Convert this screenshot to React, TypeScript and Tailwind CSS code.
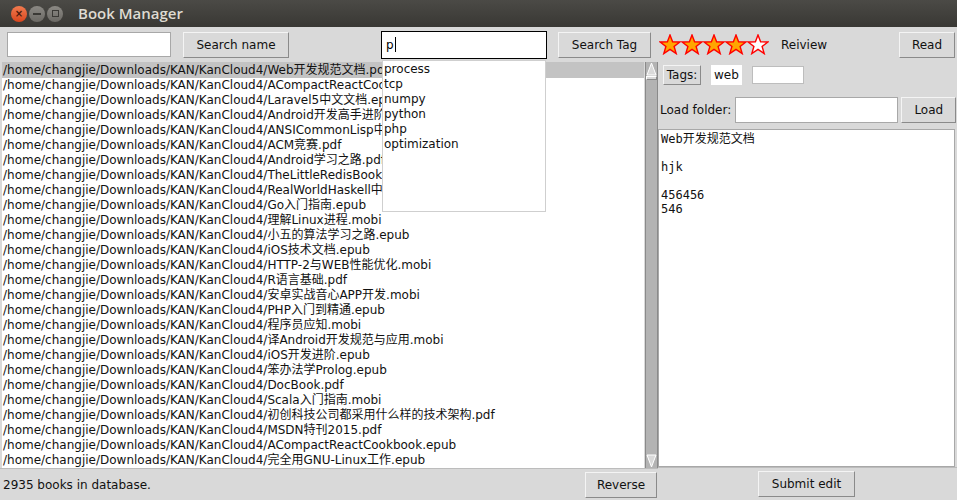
import React from 'react'

const prefix = '/home/changjie/Downloads/KAN/KanCloud4/'
const books = [
  'Web开发规范文档.pdf',
  'ACompactReactCookbook.pdf',
  'Laravel5中文文档.epub',
  'Android开发高手进阶.pdf',
  'ANSICommonLisp中文版.pdf',
  'ACM竞赛.pdf',
  'Android学习之路.pdf',
  'TheLittleRedisBook中文版.pdf',
  'RealWorldHaskell中文版.pdf',
  'Go入门指南.epub',
  '理解Linux进程.mobi',
  '小五的算法学习之路.epub',
  'iOS技术文档.epub',
  'HTTP-2与WEB性能优化.mobi',
  'R语言基础.pdf',
  '安卓实战音心APP开发.mobi',
  'PHP入门到精通.epub',
  '程序员应知.mobi',
  '译Android开发规范与应用.mobi',
  'iOS开发进阶.epub',
  '笨办法学Prolog.epub',
  'DocBook.pdf',
  'Scala入门指南.mobi',
  '初创科技公司都采用什么样的技术架构.pdf',
  'MSDN特刊2015.pdf',
  'ACompactReactCookbook.epub',
  '完全用GNU-Linux工作.epub',
]

const tags = ['process', 'tcp', 'numpy', 'python', 'php', 'optimization']

const font = { fontFamily: '"DejaVu Sans", "Noto Sans CJK SC", sans-serif' }

function Btn({ children, className = '' }: { children: React.ReactNode; className?: string }) {
  return (
    <div
      className={`flex shrink-0 items-center justify-center whitespace-nowrap border border-t-[#f4f4f4] border-l-[#f4f4f4] border-r-[#8a8a8a] border-b-[#8a8a8a] bg-[#d9d9d9] text-[12px] text-[#111] ${className}`}
    >
      {children}
    </div>
  )
}

function Star({ filled }: { filled: boolean }) {
  return (
    <svg width="22" height="21" viewBox="0 0 22 21">
      <polygon
        points="11,1 13.6,7.8 20.8,8 15.1,12.5 17.2,19.6 11,15.4 4.8,19.6 6.9,12.5 1.2,8 8.4,7.8"
        fill={filled ? '#ffa500' : '#ffffff'}
        stroke="#ff0000"
        strokeWidth="1.4"
      />
    </svg>
  )
}

export default function App() {
  return (
    <div className="flex h-[500px] w-[957px] flex-col overflow-hidden bg-[#d9d9d9]" style={font}>
      {/* title bar */}
      <div className="flex h-[27px] shrink-0 items-center bg-gradient-to-b from-[#4b4a46] to-[#393834] pl-[11px]">
        <div className="flex h-[16px] w-[16px] items-center justify-center rounded-full bg-gradient-to-b from-[#f07a4e] to-[#d9451c] text-[10px] font-bold leading-none text-[#4a1a0c]">
          ×
        </div>
        <div className="ml-[2px] flex h-[16px] w-[16px] items-center justify-center rounded-full bg-gradient-to-b from-[#8b8984] to-[#6b6964]">
          <div className="h-[2px] w-[8px] bg-[#3a3935]" />
        </div>
        <div className="ml-[2px] flex h-[16px] w-[16px] items-center justify-center rounded-full bg-gradient-to-b from-[#8b8984] to-[#6b6964]">
          <div className="h-[7px] w-[7px] border border-[#3a3935]" />
        </div>
        <span
          className="ml-[15px] whitespace-nowrap text-[15px] font-semibold text-[#dfdbd2]"
          style={{ fontFamily: '"Open Sans", "DejaVu Sans", sans-serif' }}
        >
          Book Manager
        </span>
      </div>

      <div className="flex min-h-0 flex-1">
        {/* left column */}
        <div className="flex w-[658px] shrink-0 flex-col">
          <div className="relative flex h-[35px] shrink-0 items-center">
            <div className="ml-[7px] h-[25px] w-[164px] shrink-0 border border-[#a8a8a8] bg-white" />
            <Btn className="ml-[12px] h-[26px] w-[106px]">Search name</Btn>
            <div className="ml-[92px] flex h-[28px] w-[166px] shrink-0 items-center border border-black bg-white px-[4px] text-[12px]">
              p<span className="ml-[1px] h-[15px] w-[1px] bg-black" />
            </div>
            <Btn className="ml-[11px] h-[26px] w-[93px]">Search Tag</Btn>

            {/* autocomplete dropdown */}
            <div className="absolute left-[382px] top-[33px] z-10 h-[152px] w-[164px] border border-[#cfcfcf] bg-white pt-[1px] text-[12px] leading-[15px] text-[#111]">
              {tags.map((t) => (
                <div key={t} className="pl-[1px]">
                  {t}
                </div>
              ))}
            </div>
          </div>

          <div className="flex h-[406px] shrink-0">
            <div className="ml-[2px] w-[642px] overflow-hidden bg-white text-[12px] leading-[15px] text-[#111]">
              {books.map((b, i) => (
                <div key={i} className={`whitespace-nowrap pl-[1px] pt-[1px] ${i === 0 ? 'bg-[#c3c3c3]' : ''}`}>
                  <div className="-mb-[1px]">{prefix + b}</div>
                </div>
              ))}
            </div>
            {/* scrollbar */}
            <div className="ml-[1px] flex w-[13px] flex-col border-x border-[#8a8a8a] bg-[#b3b3b3]">
              <svg width="11" height="14" viewBox="0 0 11 14" className="shrink-0">
                <polygon points="5.5,1 10,13 1,13" fill="#d9d9d9" stroke="#ffffff" strokeWidth="1" />
              </svg>
              <div className="h-[4px] border border-t-white border-l-white border-r-[#8a8a8a] border-b-[#8a8a8a] bg-[#d9d9d9]" />
              <div className="flex-1" />
              <svg width="11" height="14" viewBox="0 0 11 14" className="shrink-0">
                <polygon points="1,1 10,1 5.5,13" fill="#d9d9d9" stroke="#ffffff" strokeWidth="1" />
              </svg>
            </div>
          </div>

          <div className="flex flex-1 items-center border-t border-[#bcbcbc]">
            <span className="ml-[3px] whitespace-nowrap text-[12px] text-[#111]">2935 books in database.</span>
            <Btn className="ml-auto mr-[1px] h-[26px] w-[72px]">Reverse</Btn>
          </div>
        </div>

        {/* right column */}
        <div className="flex w-[299px] shrink-0 flex-col">
          <div className="flex h-[35px] shrink-0 items-center">
            <div className="ml-[1px] flex">
              {[true, true, true, true, false].map((f, i) => (
                <Star key={i} filled={f} />
              ))}
            </div>
            <span className="ml-[12px] whitespace-nowrap text-[12px] text-[#111]">Reiview</span>
            <Btn className="ml-auto mr-[2px] h-[26px] w-[56px]">Read</Btn>
          </div>

          <div className="flex h-[25px] shrink-0 items-center">
            <Btn className="ml-[5px] h-[20px] w-[38px] border-[#555] border-t-[#f4f4f4] border-l-[#f4f4f4]">Tags:</Btn>
            <div className="ml-[10px] flex h-[20px] items-center bg-white px-[3px] text-[12px] text-[#111]">web</div>
            <div className="ml-[10px] h-[18px] w-[52px] border border-[#bdbdbd] bg-white" />
          </div>

          <div className="mt-[9px] flex h-[28px] shrink-0 items-center">
            <span className="ml-[2px] whitespace-nowrap text-[12px] text-[#111]">Load folder:</span>
            <div className="ml-[4px] h-[26px] w-[163px] shrink-0 border border-[#a8a8a8] bg-white" />
            <Btn className="ml-[3px] h-[26px] w-[55px]">Load</Btn>
          </div>

          <div
            className="mt-[5px] mr-[2px] h-[338px] shrink-0 border border-[#a8a8a8] bg-white px-[2px] pt-[2px] text-[12px] leading-[14px] text-[#111]"
            style={{ fontFamily: '"DejaVu Sans Mono", "Noto Sans CJK SC", monospace' }}
          >
            <div>Web开发规范文档</div>
            <div>&nbsp;</div>
            <div>hjk</div>
            <div>&nbsp;</div>
            <div>456456</div>
            <div>546</div>
          </div>

          <div className="flex flex-1 items-center border-t border-[#bcbcbc]">
            <Btn className="ml-[100px] h-[26px] w-[97px]">Submit edit</Btn>
          </div>
        </div>
      </div>
    </div>
  )
}
